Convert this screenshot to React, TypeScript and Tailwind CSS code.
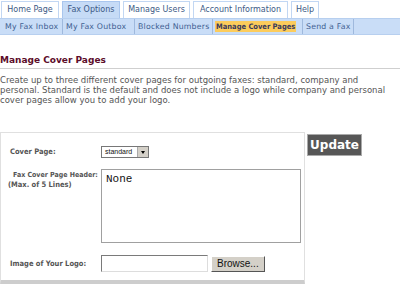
import React from 'react';

const TABS = [
  { label: 'Home Page', w: 'w-[58px]' },
  { label: 'Fax Options', w: 'w-[58px]' },
  { label: 'Manage Users', w: 'w-[67px]' },
  { label: 'Account Information', w: 'w-[95px]' },
  { label: 'Help', w: 'w-[28px]' },
];

const SUBS = [
  { label: 'My Fax Inbox', w: 'w-[61px]' },
  { label: 'My Fax Outbox', w: 'w-[72px]' },
  { label: 'Blocked Numbers', w: 'w-[78px]' },
  { label: 'Manage Cover Pages', w: 'w-[90px]' },
  { label: 'Send a Fax', w: 'w-[51px]' },
];

export default function App() {
  return (
    <div className="w-[400px] h-[284px] overflow-hidden bg-white font-['DejaVu_Sans',sans-serif] text-[#444]">
      {/* Top tabs */}
      <div className="flex items-end gap-[3px] pl-px h-[18px]">
        {TABS.map((t) => (
          <div
            key={t.label}
            className={`${t.w} h-[17px] flex items-center justify-center whitespace-nowrap border border-b-0 text-[8px] text-[#3d5a86] ${
              t.label === 'Fax Options' ? 'bg-[#c6dbf6] border-[#a9c6ee]' : 'bg-white border-[#c2d7f3]'
            }`}
          >
            {t.label}
          </div>
        ))}
      </div>

      {/* Sub nav */}
      <div className="flex items-stretch h-[17px] pl-[2px] bg-[#c9ddf7] border-y border-[#b7cfef]">
        {SUBS.map((s) => (
          <div key={s.label} className={`${s.w} flex items-center pl-[2px] border-r border-[#9fb9dd] whitespace-nowrap`}>
            <span
              className={`px-[1px] ${
                s.label === 'Manage Cover Pages'
                  ? "bg-[#fccc5c] text-[#3a3a5a] font-bold text-[7.5px] font-['DejaVu_Sans_Condensed',sans-serif]"
                  : 'text-[#3f5f92] text-[7.8px] tracking-[0.2px]'
              }`}
            >
              {s.label}
            </span>
          </div>
        ))}
      </div>

      {/* Heading */}
      <div className="mt-[19px] border-b border-[#cfcfcf] pb-[2px]">
        <h1 className="text-[9px] font-bold text-[#5c0d2a] leading-[12px]">Manage Cover Pages</h1>
      </div>

      <p className="mt-[6px] text-[8.5px] leading-[10px] text-[#555] pr-[10px]">
        Create up to three different cover pages for outgoing faxes: standard, company and personal. Standard is the default and does not include a logo while company and personal cover pages allow you to add your logo.
      </p>

      {/* Form */}
      <div className="flex mt-[27px]">
        <div className="w-[305px] border border-[#e0e0e0] border-b-[5px] border-b-[#cdcdcd] pb-[8px]">
          <div className="flex items-center mt-[13px]">
            <div className="w-[100px] pl-[9px] text-[7.5px] font-bold text-[#555] font-['DejaVu_Sans_Condensed',sans-serif]">Cover Page:</div>
            <div className="h-[12px] w-[48px] border border-[#777] bg-white flex items-center justify-between pl-[3px]">
              <span className="text-[7px] font-['Liberation_Sans_Narrow','Liberation_Sans',sans-serif] text-[#111]">standard</span>
              <span className="w-[11px] h-[10px] bg-[#d4d0c8] border-l border-[#aaa] flex items-center justify-center">
                <span className="w-0 h-0 border-x-[2.5px] border-x-transparent border-t-[3px] border-t-black" />
              </span>
            </div>
          </div>

          <div className="flex mt-[11px]">
            <div className="w-[100px] font-bold text-[#555] leading-[9px] pt-[2px] whitespace-nowrap font-['DejaVu_Sans_Condensed',sans-serif]">
              <div className="pl-[12px] text-[7px]">Fax Cover Page Header:</div>
              <div className="pl-[7px] text-[7.5px]">(Max. of 5 Lines)</div>
            </div>
            <div className="w-[200px] h-[74px] border border-[#a0a0a0] bg-white px-[4px] pt-[1px] text-[11px] font-['Liberation_Mono',monospace] text-[#111]">
              None
            </div>
          </div>

          <div className="flex items-center mt-[12px]">
            <div className="w-[100px] pl-[9px] text-[7.5px] font-bold text-[#555] font-['DejaVu_Sans_Condensed',sans-serif]">Image of Your Logo:</div>
            <div className="w-[107px] h-[17px] border border-[#7a7a7a] border-r-[#ddd] border-b-[#ddd] bg-white" />
            <div className="ml-[3px] h-[16px] px-[5px] bg-[#d4d0c8] border border-[#fff] border-r-[#555] border-b-[#555] flex items-center text-[10px] font-['Liberation_Sans',sans-serif] text-[#111]">
              Browse...
            </div>
          </div>
        </div>

        <div className="flex-1 pl-[2px] pt-[2px]">
          <div className="w-[55px] h-[22px] bg-[#575757] border border-[#aaa] flex items-center justify-center text-white font-bold text-[12px]">
            Update
          </div>
        </div>
      </div>
    </div>
  );
}
